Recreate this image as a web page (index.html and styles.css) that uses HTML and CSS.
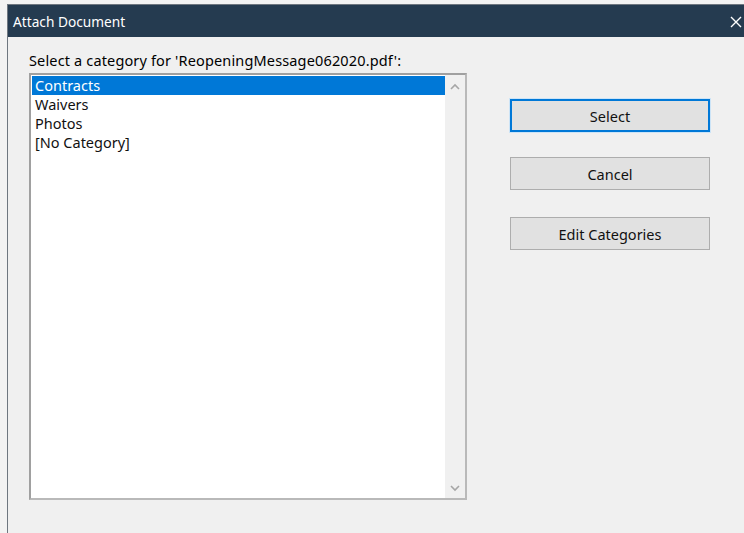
FILE: index.html
```html
<!DOCTYPE html>
<html>
<head>
<meta charset="utf-8">
<title>Attach Document</title>
<link rel="stylesheet" href="styles.css">
</head>
<body>
<div class="window">
  <div class="titlebar">
    <span class="title">Attach Document</span>
    <svg class="close" width="12" height="12" viewBox="0 0 12 12">
      <path d="M1 1 L11 11 M11 1 L1 11" stroke="#ffffff" stroke-width="1.4" fill="none"/>
    </svg>
  </div>
  <div class="content">
    <div class="left">
      <div class="prompt">Select a category for 'ReopeningMessage062020.pdf':</div>
      <div class="listbox">
        <ul class="items">
          <li class="item selected">Contracts</li>
          <li class="item">Waivers</li>
          <li class="item">Photos</li>
          <li class="item">[No Category]</li>
        </ul>
        <div class="scrollbar">
          <svg width="12" height="8" viewBox="0 0 12 8"><path d="M2 6 L6 2 L10 6" stroke="#a6a6a6" stroke-width="1.6" fill="none"/></svg>
          <svg width="12" height="8" viewBox="0 0 12 8"><path d="M2 2 L6 6 L10 2" stroke="#a6a6a6" stroke-width="1.6" fill="none"/></svg>
        </div>
      </div>
    </div>
    <div class="buttons">
      <button class="btn default">Select</button>
      <button class="btn">Cancel</button>
      <button class="btn">Edit Categories</button>
    </div>
  </div>
</div>
</body>
</html>
```
FILE: styles.css
```css
html, body {
  margin: 0;
  height: 100%;
  background: #f3f3f3;
  overflow: hidden;
}

body {
  padding: 4px 0 0 7px;
  box-sizing: border-box;
  font-family: "Noto Sans", "DejaVu Sans", sans-serif;
  font-size: 14.5px;
  color: #000;
}

.window {
  height: 100%;
  border-left: 1px solid #6f7780;
  border-top: 1px solid #6f7780;
  background: #f0f0f0;
  display: flex;
  flex-direction: column;
}

.titlebar {
  height: 32px;
  background: #253b50;
  display: flex;
  align-items: center;
  justify-content: space-between;
  padding: 0 2px 0 5px;
  flex: none;
}

.title {
  color: #ffffff;
  font-size: 13.7px;
}

.close {
  margin-top: 2px;
}

.content {
  display: flex;
  padding: 15px 0 0 21px;
}

.left {
  display: flex;
  flex-direction: column;
}

.prompt {
  height: 21px;
  line-height: 16px;
  letter-spacing: 0.15px;
}

.listbox {
  width: 434px;
  height: 423px;
  border: 2px solid #a0a0a0;
  border-color: #a0a0a0 #b9b9b9 #b9b9b9 #a0a0a0;
  background: #ffffff;
  display: flex;
}

.items {
  list-style: none;
  margin: 0;
  padding: 1px 0 0 1px;
  flex: 1;
}

.item {
  height: 19px;
  line-height: 19px;
  padding-left: 3px;
  color: #111;
}

.item.selected {
  background: #0078d7;
  color: #ffffff;
}

.scrollbar {
  width: 20px;
  background: #f0f0f0;
  display: flex;
  flex-direction: column;
  justify-content: space-between;
  align-items: center;
  padding: 8px 0 6px;
}

.buttons {
  display: flex;
  flex-direction: column;
  margin-left: 43px;
  padding-top: 47px;
}

.btn {
  width: 200px;
  height: 33px;
  margin-bottom: 25px;
  background: #e1e1e1;
  border: 1px solid #adadad;
  font-family: inherit;
  font-size: 14.5px;
  color: #111;
  padding: 0;
}

.btn:nth-child(2) {
  margin-bottom: 27px;
}

.btn.default {
  border: 2px solid #0078d7;
  box-shadow: 0 0 0 1px #cce4f7;
}
```
